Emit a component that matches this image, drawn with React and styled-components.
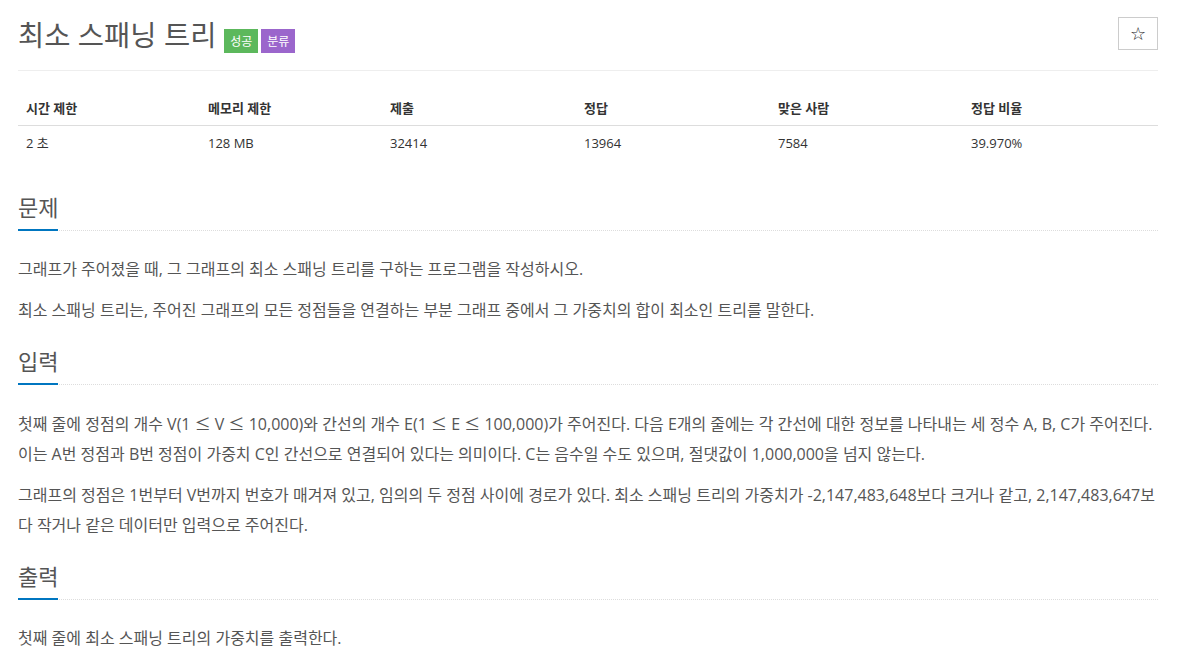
import React from "react";
import styled, { createGlobalStyle } from "styled-components";

const GlobalStyle = createGlobalStyle`
  body {
    margin: 0;
    background: #fff;
    font-family: "Open Sans", "Noto Sans CJK KR", sans-serif;
    color: #555;
  }
`;

const Page = styled.div`
  padding: 15px 22px 0 18px;
`;

const Header = styled.div`
  display: flex;
  align-items: flex-start;
  justify-content: space-between;
  padding-bottom: 15px;
  border-bottom: 1px solid #eee;
`;

const TitleWrap = styled.div`
  display: flex;
  align-items: flex-start;
  gap: 8px;
`;

const Title = styled.h1`
  margin: 0;
  font-size: 28.5px;
  line-height: 40px;
  font-weight: 400;
  color: #555;
`;

const Badges = styled.div`
  display: flex;
  gap: 3px;
  margin-top: 14px;
`;

const Badge = styled.span`
  display: inline-flex;
  align-items: center;
  justify-content: center;
  width: 34px;
  height: 24px;
  font-size: 12px;
  color: #fff;
  background: ${(p) => p.color};
`;

const StarButton = styled.button`
  width: 40px;
  height: 33px;
  margin-top: 2px;
  padding: 0;
  background: #fff;
  border: 1px solid #ccc;
  color: #222;
  font-family: "DejaVu Sans", sans-serif;
  font-size: 18px;
  display: flex;
  align-items: center;
  justify-content: center;
`;

const InfoTable = styled.table`
  width: 100%;
  margin-top: 20px;
  border-collapse: collapse;
  font-size: 13px;
  color: #333;

  th,
  td {
    text-align: left;
    padding: 8px;
    line-height: 18px;
  }
  th {
    font-weight: 700;
    border-bottom: 1px solid #ddd;
  }
`;

const Section = styled.section`
  margin-top: ${(p) => p.top}px;
`;

const Headline = styled.div`
  border-bottom: 1px dotted #ddd;
  margin-bottom: 23px;
`;

const HeadTitle = styled.h2`
  display: inline-block;
  margin: 0 0 -1px;
  padding-bottom: 7px;
  font-size: 22px;
  line-height: 30px;
  font-weight: 400;
  color: #555;
  border-bottom: 2px solid #0076c0;
`;

const Text = styled.p`
  margin: 0 0 11px;
  font-size: 16px;
  line-height: 30px;
  color: #555;
`;

const Sym = styled.span`
  font-family: "Noto Sans CJK KR", sans-serif;
`;

const stats = [
  ["시간 제한", "2 초"],
  ["메모리 제한", "128 MB"],
  ["제출", "32414"],
  ["정답", "13964"],
  ["맞은 사람", "7584"],
  ["정답 비율", "39.970%"],
];

const widths = [182, 182, 194, 194, 193, 195];

export default function App() {
  return (
    <Page>
      <GlobalStyle />
      <Header>
        <TitleWrap>
          <Title>최소 스패닝 트리</Title>
          <Badges>
            <Badge color="#5cb85c">성공</Badge>
            <Badge color="#9b66cc">분류</Badge>
          </Badges>
        </TitleWrap>
        <StarButton>☆</StarButton>
      </Header>

      <InfoTable>
        <colgroup>
          {widths.map((w, i) => (
            <col key={i} style={{ width: w }} />
          ))}
        </colgroup>
        <thead>
          <tr>
            {stats.map(([h]) => (
              <th key={h}>{h}</th>
            ))}
          </tr>
        </thead>
        <tbody>
          <tr>
            {stats.map(([h, v]) => (
              <td key={h}>{v}</td>
            ))}
          </tr>
        </tbody>
      </InfoTable>

      <Section top={32}>
        <Headline>
          <HeadTitle>문제</HeadTitle>
        </Headline>
        <Text>그래프가 주어졌을 때, 그 그래프의 최소 스패닝 트리를 구하는 프로그램을 작성하시오.</Text>
        <Text>최소 스패닝 트리는, 주어진 그래프의 모든 정점들을 연결하는 부분 그래프 중에서 그 가중치의 합이 최소인 트리를 말한다.</Text>
      </Section>

      <Section top={21}>
        <Headline>
          <HeadTitle>입력</HeadTitle>
        </Headline>
        <Text>
          첫째 줄에 정점의 개수 V(1 <Sym>≤</Sym> V <Sym>≤</Sym> 10,000)와 간선의 개수 E(1 <Sym>≤</Sym> E <Sym>≤</Sym> 100,000)가 주어진다. 다음 E개의 줄에는 각 간선에 대한 정보를 나타내는 세 정수 A, B, C가 주어진다. 이는 A번 정점과 B번 정점이 가중치 C인 간선으로 연결되어 있다는 의미이다. C는 음수일 수도 있으며, 절댓값이 1,000,000을 넘지 않는다.
        </Text>
        <Text>
          그래프의 정점은 1번부터 V번까지 번호가 매겨져 있고, 임의의 두 정점 사이에 경로가 있다. 최소 스패닝 트리의 가중치가 -2,147,483,648보다 크거나 같고, 2,147,483,647보다 작거나 같은 데이터만 입력으로 주어진다.
        </Text>
      </Section>

      <Section top={21}>
        <Headline>
          <HeadTitle>출력</HeadTitle>
        </Headline>
        <Text>첫째 줄에 최소 스패닝 트리의 가중치를 출력한다.</Text>
      </Section>
    </Page>
  );
}
